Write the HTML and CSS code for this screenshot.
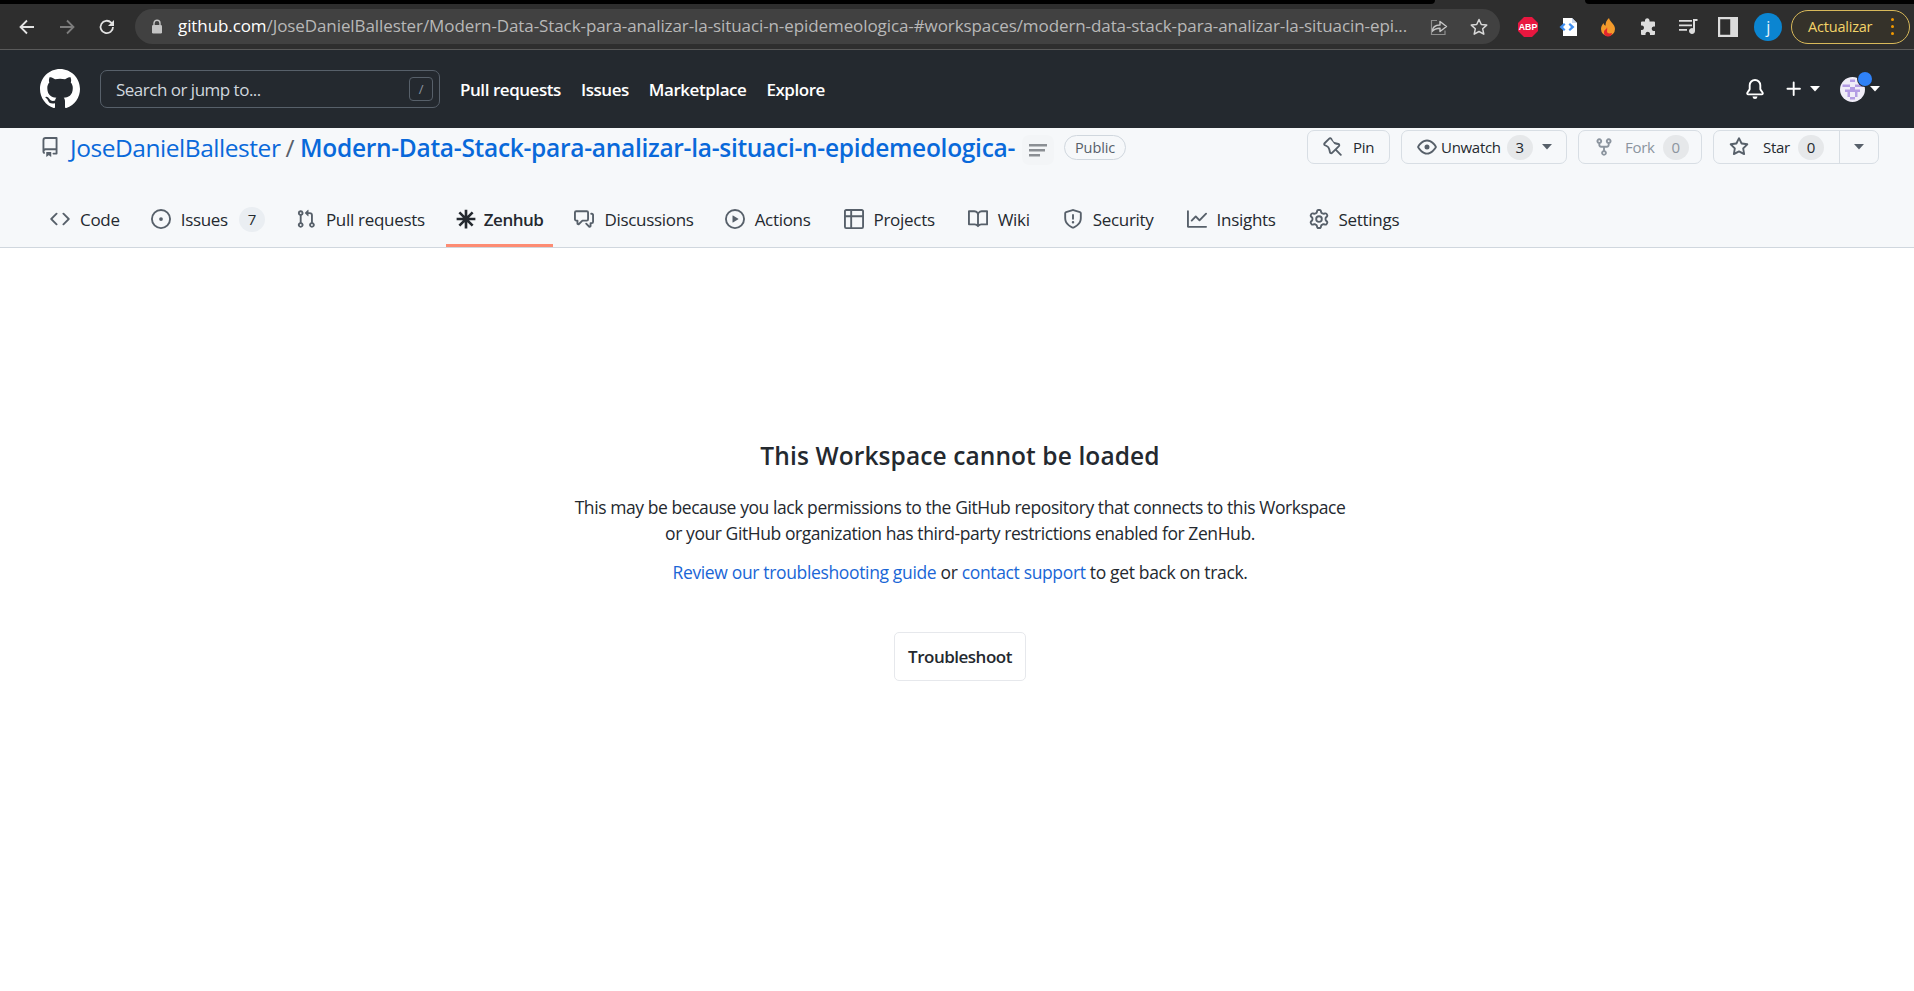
FILE: index.html
```html
<!DOCTYPE html>
<html lang="en">
<head>
<meta charset="utf-8">
<title>This Workspace cannot be loaded</title>
<link rel="stylesheet" href="styles.css">
</head>
<body>
<svg class="defs" width="0" height="0" aria-hidden="true">
  <symbol id="i-code" viewBox="0 0 16 16"><path d="M4.72 3.22a.75.75 0 011.06 1.06L2.06 8l3.72 3.72a.75.75 0 11-1.06 1.06L.47 8.53a.75.75 0 010-1.06l4.25-4.25zm6.56 0a.75.75 0 10-1.06 1.06L13.94 8l-3.72 3.72a.75.75 0 101.06 1.06l4.25-4.25a.75.75 0 000-1.06l-4.25-4.25z"/></symbol>
  <symbol id="i-issue" viewBox="0 0 16 16"><path d="M8 9.5a1.5 1.5 0 100-3 1.5 1.5 0 000 3z"/><path fill-rule="evenodd" d="M8 0a8 8 0 100 16A8 8 0 008 0zM1.5 8a6.5 6.5 0 1113 0 6.5 6.5 0 01-13 0z"/></symbol>
  <symbol id="i-pr" viewBox="0 0 16 16"><path fill-rule="evenodd" d="M7.177 3.073L9.573.677A.25.25 0 0110 .854v4.792a.25.25 0 01-.427.177L7.177 3.427a.25.25 0 010-.354zM3.75 2.5a.75.75 0 100 1.5.75.75 0 000-1.5zm-2.25.75a2.25 2.25 0 113 2.122v5.256a2.251 2.251 0 11-1.5 0V5.372A2.25 2.25 0 011.5 3.25zM11 2.5h-1V4h1a1 1 0 011 1v5.628a2.251 2.251 0 101.5 0V5A2.5 2.5 0 0011 2.5zm1 10.25a.75.75 0 111.5 0 .75.75 0 01-1.5 0zM3.75 12a.75.75 0 100 1.5.75.75 0 000-1.5z"/></symbol>
  <symbol id="i-zen" viewBox="0 0 16 16"><path d="M8 .5v15M.5 8h15M2.700 2.700l10.600 10.600M13.300 2.700L2.700 13.300" stroke="#24292f" stroke-width="2.100" fill="none"/><circle cx="8" cy="8" r="2.600" fill="#24292f"/></symbol>
  <symbol id="i-disc" viewBox="0 0 16 16"><path fill-rule="evenodd" d="M1.5 2.75a.25.25 0 01.25-.25h8.5a.25.25 0 01.25.25v5.5a.25.25 0 01-.25.25h-3.5a.75.75 0 00-.53.22L3.5 11.44V9.25a.75.75 0 00-.75-.75h-1a.25.25 0 01-.25-.25v-5.5zM1.75 1A1.75 1.75 0 000 2.75v5.5C0 9.216.784 10 1.75 10H2v1.543a1.457 1.457 0 002.487 1.03L7.061 10h3.189A1.75 1.75 0 0012 8.25v-5.5A1.75 1.75 0 0010.25 1h-8.5zM14.5 4.75a.25.25 0 00-.25-.25h-.5a.75.75 0 110-1.5h.5c.966 0 1.75.784 1.75 1.75v5.5A1.75 1.75 0 0114.25 12H14v1.543a1.457 1.457 0 01-2.487 1.03L9.22 12.28a.75.75 0 111.06-1.06l2.22 2.22v-2.19a.75.75 0 01.75-.75h1a.25.25 0 00.25-.25v-5.5z"/></symbol>
  <symbol id="i-play" viewBox="0 0 16 16"><path fill-rule="evenodd" d="M1.5 8a6.5 6.5 0 1113 0 6.5 6.5 0 01-13 0zM8 0a8 8 0 100 16A8 8 0 008 0zM6.379 5.227A.25.25 0 006 5.442v5.117a.25.25 0 00.379.214l4.264-2.559a.25.25 0 000-.428L6.379 5.227z"/></symbol>
  <symbol id="i-table" viewBox="0 0 16 16"><path fill-rule="evenodd" d="M0 1.75C0 .784.784 0 1.75 0h12.5C15.216 0 16 .784 16 1.75v12.5A1.75 1.75 0 0114.25 16H1.75A1.75 1.75 0 010 14.25V1.75zM1.5 6.5v7.75c0 .138.112.25.25.25H5v-8H1.5zM5 5H1.5V1.75a.25.25 0 01.25-.25H5V5zm1.5 1.5v8h7.75a.25.25 0 00.25-.25V6.5h-8zm8-1.5h-8V1.5h7.75a.25.25 0 01.25.25V5z"/></symbol>
  <symbol id="i-book" viewBox="0 0 16 16"><path fill-rule="evenodd" d="M0 1.75A.75.75 0 01.75 1h4.253c1.227 0 2.317.59 3 1.501A3.744 3.744 0 0111.006 1h4.245a.75.75 0 01.75.75v10.5a.75.75 0 01-.75.75h-4.507a2.25 2.25 0 00-1.591.659l-.622.621a.75.75 0 01-1.06 0l-.622-.621A2.25 2.25 0 005.258 13H.75a.75.75 0 01-.75-.75V1.75zm8.755 3a2.25 2.25 0 012.25-2.25H14.5v9h-3.757c-.71 0-1.4.201-1.992.572l.004-7.322zm-1.504 7.324l.004-5.073-.002-2.253A2.25 2.25 0 005.003 2.5H1.5v9h3.757a3.75 3.75 0 011.994.574z"/></symbol>
  <symbol id="i-shield" viewBox="0 0 16 16"><path fill-rule="evenodd" d="M7.467.133a1.75 1.75 0 011.066 0l5.25 1.68A1.75 1.75 0 0115 3.48V7c0 1.566-.32 3.182-1.303 4.682-.983 1.498-2.585 2.813-5.032 3.855a1.7 1.7 0 01-1.33 0c-2.447-1.042-4.049-2.357-5.032-3.855C1.32 10.182 1 8.566 1 7V3.48a1.75 1.75 0 011.217-1.667l5.25-1.68zm.61 1.429a.25.25 0 00-.153 0l-5.25 1.68a.25.25 0 00-.174.238V7c0 1.358.275 2.666 1.057 3.86.784 1.194 2.121 2.34 4.366 3.297a.2.2 0 00.154 0c2.245-.956 3.582-2.104 4.366-3.298C13.225 9.666 13.5 8.36 13.5 7V3.48a.25.25 0 00-.174-.237l-5.25-1.68zM9 10.5a1 1 0 11-2 0 1 1 0 012 0zm-.25-5.75a.75.75 0 10-1.5 0v3a.75.75 0 001.5 0v-3z"/></symbol>
  <symbol id="i-graph" viewBox="0 0 16 16"><path fill-rule="evenodd" d="M1.5 1.75a.75.75 0 00-1.5 0v12.5c0 .414.336.75.75.75h14.5a.75.75 0 000-1.5H1.5V1.75zm14.28 2.53a.75.75 0 00-1.06-1.06L10 7.94 7.53 5.47a.75.75 0 00-1.06 0L3.22 8.72a.75.75 0 001.06 1.06L7 7.06l2.47 2.47a.75.75 0 001.06 0l5.25-5.25z"/></symbol>
  <symbol id="i-gear" viewBox="0 0 16 16"><path fill-rule="evenodd" d="M7.429 1.525a6.593 6.593 0 011.142 0c.036.003.108.036.137.146l.289 1.105c.147.56.55.967.997 1.189.174.086.341.183.501.29.417.278.97.423 1.53.27l1.102-.303c.11-.03.175.016.195.046.219.31.41.641.573.989.014.031.022.11-.059.19l-.815.806c-.411.406-.562.957-.53 1.456a4.588 4.588 0 010 .582c-.032.499.119 1.05.53 1.456l.815.806c.08.08.073.159.059.19a6.494 6.494 0 01-.573.99c-.02.029-.086.074-.195.045l-1.103-.303c-.559-.153-1.112-.008-1.529.27-.16.107-.327.204-.5.29-.449.222-.851.628-.998 1.189l-.289 1.105c-.029.11-.101.143-.137.146a6.613 6.613 0 01-1.142 0c-.036-.003-.108-.037-.137-.146l-.289-1.105c-.147-.56-.55-.967-.997-1.189a4.502 4.502 0 01-.501-.29c-.417-.278-.97-.423-1.53-.27l-1.102.303c-.11.03-.175-.016-.195-.046a6.492 6.492 0 01-.573-.989c-.014-.031-.022-.11.059-.19l.815-.806c.411-.406.562-.957.53-1.456a4.587 4.587 0 010-.582c.032-.499-.119-1.05-.53-1.456l-.815-.806c-.08-.08-.073-.159-.059-.19a6.44 6.44 0 01.573-.99c.02-.029.086-.075.195-.045l1.103.303c.559.153 1.112.008 1.529-.27.16-.107.327-.204.5-.29.449-.222.851-.628.998-1.189l.289-1.105c.029-.11.101-.143.137-.146zM8 0c-.236 0-.47.01-.701.03-.743.065-1.29.615-1.458 1.261l-.29 1.106c-.017.066-.078.158-.211.224a5.994 5.994 0 00-.668.386c-.123.082-.233.09-.3.071L3.27 2.776c-.644-.177-1.392.02-1.82.63a7.977 7.977 0 00-.704 1.217c-.315.675-.111 1.422.363 1.891l.815.806c.05.048.098.147.088.294a6.084 6.084 0 000 .772c.01.147-.038.246-.088.294l-.815.806c-.474.469-.678 1.216-.363 1.891.2.428.436.835.704 1.218.428.609 1.176.806 1.82.63l1.103-.303c.066-.019.176-.011.299.071.213.143.436.272.668.386.133.066.194.158.212.224l.289 1.106c.169.646.715 1.196 1.458 1.26a8.094 8.094 0 001.402 0c.743-.064 1.29-.614 1.458-1.26l.29-1.106c.017-.066.078-.158.211-.224a5.98 5.98 0 00.668-.386c.123-.082.233-.09.3-.071l1.102.302c.644.177 1.392-.02 1.82-.63.268-.382.505-.789.704-1.217.315-.675.111-1.422-.364-1.891l-.814-.806c-.05-.048-.098-.147-.088-.294a6.1 6.1 0 000-.772c-.01-.147.039-.246.088-.294l.814-.806c.475-.469.679-1.216.364-1.891a7.992 7.992 0 00-.704-1.218c-.428-.609-1.176-.806-1.82-.63l-1.103.303c-.066.019-.176.011-.299-.071a5.991 5.991 0 00-.668-.386c-.133-.066-.194-.158-.212-.224L10.16 1.29C9.99.645 9.444.095 8.701.031A8.094 8.094 0 008 0zm1.5 8a1.5 1.5 0 11-3 0 1.5 1.5 0 013 0zM11 8a3 3 0 11-6 0 3 3 0 016 0z"/></symbol>
  <symbol id="i-repo" viewBox="0 0 16 16"><path fill-rule="evenodd" d="M2 2.5A2.5 2.5 0 014.5 0h8.75a.75.75 0 01.75.75v12.5a.75.75 0 01-.75.75h-2.5a.75.75 0 110-1.5h1.75v-2h-8a1 1 0 00-.714 1.7.75.75 0 01-1.072 1.05A2.495 2.495 0 012 11.5v-9zm10.5-1V9h-8c-.356 0-.694.074-1 .208V2.5a1 1 0 011-1h8zM5 12.25v3.25a.25.25 0 00.4.2l1.45-1.087a.25.25 0 01.3 0L8.6 15.7a.25.25 0 00.4-.2v-3.25a.25.25 0 00-.25-.25h-3.5a.25.25 0 00-.25.25z"/></symbol>
  <symbol id="i-pin" viewBox="0 0 16 16"><path fill-rule="evenodd" d="M4.456.734a1.75 1.75 0 012.826.504l.613 1.327a3.081 3.081 0 002.084 1.707l2.454.584c1.332.317 1.8 1.972.832 2.94L11.06 10l3.72 3.72a.75.75 0 11-1.061 1.06L10 11.06l-2.204 2.205c-.968.968-2.623.5-2.94-.832l-.584-2.454a3.081 3.081 0 00-1.707-2.084l-1.327-.613a1.75 1.75 0 01-.504-2.826L4.456.734zM5.92 1.866a.25.25 0 00-.404-.072L1.794 5.516a.25.25 0 00.072.404l1.328.613A4.582 4.582 0 015.73 9.63l.584 2.454a.25.25 0 00.42.12l5.47-5.47a.25.25 0 00-.12-.42L10.63 6.13a4.581 4.581 0 01-3.098-2.537L5.92 1.866z"/></symbol>
  <symbol id="i-eye" viewBox="0 0 16 16"><path fill-rule="evenodd" d="M1.679 7.932c.412-.621 1.242-1.75 2.366-2.717C5.175 4.242 6.527 3.5 8 3.5c1.473 0 2.824.742 3.955 1.715 1.124.967 1.954 2.096 2.366 2.717a.119.119 0 010 .136c-.412.621-1.242 1.75-2.366 2.717C10.825 11.758 9.473 12.5 8 12.5c-1.473 0-2.824-.742-3.955-1.715C2.92 9.818 2.09 8.69 1.679 8.068a.119.119 0 010-.136zM8 2c-1.981 0-3.67.992-4.933 2.078C1.797 5.169.88 6.423.43 7.1a1.619 1.619 0 000 1.798c.45.678 1.367 1.932 2.637 3.024C4.329 13.008 6.019 14 8 14c1.981 0 3.67-.992 4.933-2.078 1.27-1.091 2.187-2.345 2.637-3.023a1.619 1.619 0 000-1.798c-.45-.678-1.367-1.932-2.637-3.023C11.671 2.992 9.981 2 8 2zm0 8a2 2 0 100-4 2 2 0 000 4z"/></symbol>
  <symbol id="i-fork" viewBox="0 0 16 16"><path fill-rule="evenodd" d="M5 3.25a.75.75 0 11-1.5 0 .75.75 0 011.5 0zm0 2.122a2.25 2.25 0 10-1.5 0v.878A2.25 2.25 0 005.75 8.5h1.5v2.128a2.251 2.251 0 101.5 0V8.5h1.5a2.25 2.25 0 002.25-2.25v-.878a2.25 2.25 0 10-1.5 0v.878a.75.75 0 01-.75.75h-4.5A.75.75 0 015 6.25v-.878zm3.75 7.378a.75.75 0 11-1.5 0 .75.75 0 011.5 0zm3-8.75a.75.75 0 100-1.5.75.75 0 000 1.5z"/></symbol>
  <symbol id="i-star" viewBox="0 0 16 16"><path fill-rule="evenodd" d="M8 .25a.75.75 0 01.673.418l1.882 3.815 4.21.612a.75.75 0 01.416 1.279l-3.046 2.97.719 4.192a.75.75 0 01-1.088.791L8 12.347l-3.766 1.98a.75.75 0 01-1.088-.79l.72-4.194L.818 6.374a.75.75 0 01.416-1.28l4.21-.611L7.327.668A.75.75 0 018 .25zm0 2.445L6.615 5.5a.75.75 0 01-.564.41l-3.097.45 2.24 2.184a.75.75 0 01.216.664l-.528 3.084 2.769-1.456a.75.75 0 01.698 0l2.77 1.456-.53-3.084a.75.75 0 01.216-.664l2.24-2.183-3.096-.45a.75.75 0 01-.564-.41L8 2.694v.001z"/></symbol>
  <symbol id="i-caret" viewBox="0 0 10 6"><path d="M0 0h10L5 5.5z"/></symbol>
</svg>

<div class="strip"><div class="strip-left"></div><div class="strip-gap"></div><div class="strip-right"></div></div>

<div class="toolbar">
  <div class="tb-btn"><svg class="tb-ico" viewBox="0 0 20 20"><path d="M17 10H4M10 3.5L3.5 10l6.5 6.5" fill="none" stroke="#e3e3e3" stroke-width="1.8"/></svg></div>
  <div class="tb-btn"><svg class="tb-ico" viewBox="0 0 20 20"><path d="M3 10h13M10 3.5l6.5 6.5-6.5 6.5" fill="none" stroke="#7d7d7d" stroke-width="1.8"/></svg></div>
  <div class="tb-btn"><svg class="tb-ico" viewBox="0 0 20 20"><path d="M16 10a6.2 6.2 0 11-1.8-4.4L16.5 8" fill="none" stroke="#e3e3e3" stroke-width="1.8"/><path d="M17 3v6h-6z" fill="#e3e3e3"/></svg></div>
  <div class="omnibox">
    <svg class="lock" viewBox="0 0 12 15"><path d="M3 6V4.2a3 3 0 016 0V6" fill="none" stroke="#c4c4c4" stroke-width="1.4"/><rect x="1" y="6" width="10" height="8.5" rx="1.2" fill="#c4c4c4"/></svg>
    <div class="url"><span class="url-host">github.com</span>/JoseDanielBallester/Modern-Data-Stack-para-analizar-la-situaci-n-epidemeologica-#workspaces/modern-data-stack-para-analizar-la-situacin-epi...</div>
    <div class="tb-btn"><svg class="tb-ico" viewBox="0 0 20 20"><path d="M11 4.5V8C6 8 3.5 10.5 3 14.5 5 12 7.500 11.200 11 11.200v3.300L17.500 9.500z" fill="none" stroke="#c8c8c8" stroke-width="1.400" stroke-linejoin="round"/><path d="M8 3.500H2.500v14H16v-4" fill="none" stroke="#8f8f8f" stroke-width="1.200"/></svg></div>
    <div class="tb-btn"><svg class="tb-ico" viewBox="0 0 20 20"><path d="M10 2.500l2.300 5 5.400.6-4 3.700 1.100 5.400L10 14.500l-4.800 2.700 1.100-5.400-4-3.700 5.400-.6z" fill="none" stroke="#d8d8d8" stroke-width="1.500" stroke-linejoin="round"/></svg></div>
  </div>
  <div class="exts">
    <div class="tb-btn"><svg class="ext" viewBox="0 0 20 20"><path d="M6 0h8l6 6v8l-6 6H6l-6-6V6z" fill="#e8173f"/><text x="10" y="13.300" class="abp">ABP</text></svg></div>
    <div class="tb-btn"><svg class="ext" viewBox="0 0 20 20"><path d="M5 1h9l5 5v13H5z" fill="#fff"/><path d="M14 1l5 5h-5z" fill="#c9d8ef"/><path d="M6 6L1.500 10 6 14l1.500-1.500L5 10l2.500-2.500z" fill="#3f8ef0"/><path d="M12 6l4.500 4-4.500 4-1.500-1.500L13 10l-2.500-2.500z" fill="#3f8ef0"/></svg></div>
    <div class="tb-btn"><svg class="ext" viewBox="0 0 20 20"><path d="M11 1c1 4 6 6 6 11a7 7 0 01-14 0c0-3 1.500-4.500 2.500-6 .3 1.500 1 2.300 2 2.800C7.500 5.800 8.500 3 11 1z" fill="#f39a2b"/><path d="M9 10c0 2.500-3 2.500-3 5a4 4 0 008 1c-2 .8-5 .5-5-1.500 0-1.500 .5-2.800 0-4.500z" fill="#e3262d"/></svg></div>
    <div class="tb-btn"><svg class="ext" viewBox="0 0 20 20"><path d="M7 3a2.300 2.300 0 014.500 0V4.500H16a1 1 0 011 1v4h-1.500a2.300 2.300 0 000 4.500H17v3a1 1 0 01-1 1h-4v-1.500a2.300 2.300 0 00-4.500 0V18H4a1 1 0 01-1-1v-4h1.200a2.300 2.300 0 000-4.500H3v-3a1 1 0 011-1h3z" fill="#dcdcdc"/></svg></div>
    <div class="tb-btn"><svg class="ext" viewBox="0 0 20 20"><path d="M1 3h13v1.800H1zM1 7.500h13v1.800H1zM1 12h8v1.800H1z" fill="#dcdcdc"/><path d="M15 2h4.500v2h-2.500v10a3 3 0 11-2-2.800z" fill="#dcdcdc"/></svg></div>
    <div class="tb-btn"><svg class="ext" viewBox="0 0 18 18"><path fill-rule="evenodd" d="M0 0h18v18H0zM2 2v14h9V2z" fill="#dcdcdc"/></svg></div>
    <div class="tb-btn"><div class="profile">j</div></div>
  </div>
  <div class="update"><span class="update-label">Actualizar</span><span class="dots"><i></i><i></i><i></i></span></div>
</div>

<header class="gh-head">
  <svg class="gh-logo" viewBox="0 0 16 16"><path fill-rule="evenodd" d="M8 0C3.58 0 0 3.58 0 8c0 3.54 2.29 6.53 5.47 7.59.4.07.55-.17.55-.38 0-.19-.01-.82-.01-1.49-2.01.37-2.53-.49-2.69-.94-.09-.23-.48-.94-.82-1.13-.28-.15-.68-.52-.01-.53.63-.01 1.08.58 1.23.82.72 1.21 1.87.87 2.33.66.07-.52.28-.87.51-1.07-1.78-.2-3.64-.89-3.64-3.95 0-.87.31-1.59.82-2.15-.08-.2-.36-1.02.08-2.12 0 0 .67-.21 2.2.82.64-.18 1.32-.27 2-.27.68 0 1.36.09 2 .27 1.53-1.04 2.2-.82 2.2-.82.44 1.1.16 1.92.08 2.12.51.56.82 1.27.82 2.15 0 3.07-1.87 3.75-3.65 3.95.29.25.54.73.54 1.48 0 1.07-.01 1.93-.01 2.2 0 .21.15.46.55.38A8.013 8.013 0 0016 8c0-4.42-3.58-8-8-8z"/></svg>
  <div class="search"><span class="search-text">Search or jump to...</span><span class="slash">/</span></div>
  <nav class="gh-nav"><a>Pull requests</a><a>Issues</a><a>Marketplace</a><a>Explore</a></nav>
  <div class="gh-right">
    <svg class="head-ico bell" viewBox="0 0 16 16"><path d="M8 16a2 2 0 001.985-1.75c.017-.137-.097-.25-.235-.25h-3.5c-.138 0-.252.113-.235.25A2 2 0 008 16z"/><path fill-rule="evenodd" d="M8 1.5A3.5 3.5 0 004.5 5v2.947c0 .346-.102.683-.294.97l-1.703 2.556a.018.018 0 00-.003.01l.001.006c0 .002.002.004.004.006a.017.017 0 00.006.004l.007.001h10.964l.007-.001a.016.016 0 00.006-.004.016.016 0 00.004-.006l.001-.007a.017.017 0 00-.003-.01l-1.703-2.554a1.75 1.75 0 01-.294-.97V5A3.5 3.5 0 008 1.5zM3 5a5 5 0 0110 0v2.947c0 .05.015.098.042.139l1.703 2.555A1.518 1.518 0 0113.482 13H2.518a1.518 1.518 0 01-1.263-2.36l1.703-2.554A.25.25 0 003 7.947V5z"/></svg>
    <svg class="head-ico plus" viewBox="0 0 16 16"><path d="M7.750 2a.75.75 0 01.75.75V7h4.250a.75.75 0 110 1.500H8.500v4.250a.75.75 0 11-1.500 0V8.500H2.750a.75.75 0 010-1.500H7V2.750A.75.75 0 017.750 2z"/></svg>
    <svg class="head-caret plus-caret"><use href="#i-caret"/></svg>
    <div class="avatar-wrap">
      <svg class="avatar" viewBox="0 0 10 10"><defs><clipPath id="av"><circle cx="5" cy="5" r="5"/></clipPath></defs><g clip-path="url(#av)"><rect width="10" height="10" fill="#f0edf8"/><path d="M4 1h2v1H4zM1 3h2v1H1zM7 3h2v1H7zM3 3h1v1H3zM6 3h1v1H6zM2 5h2v1H2zM6 5h2v1H6zM4 5h2v1H4zM3 6h1v2H3zM6 6h1v2H6zM4 8h2v1H4zM4 4h2v1H4z" fill="#b39ce4"/></g></svg>
      <span class="dot"></span>
    </div>
    <svg class="head-caret"><use href="#i-caret"/></svg>
  </div>
</header>

<section class="repo-head">
  <div class="repo-row">
    <svg class="ico repo-ico"><use href="#i-repo"/></svg>
    <a class="owner">JoseDanielBallester</a>
    <span class="sep">/</span>
    <a class="repo-name">Modern-Data-Stack-para-analizar-la-situaci-n-epidemeologica-</a>
    <span class="list-box"><svg class="list-ico" viewBox="0 0 18 14"><path d="M0 1h18v2.400H0zM0 6h16v2.400H0zM0 11h11v2.400H0z" fill="#8b8f94"/></svg></span>
    <span class="public">Public</span>
    <div class="actions">
      <div class="btn btn-pin"><svg class="ico"><use href="#i-pin"/></svg><span>Pin</span></div>
      <div class="btn btn-watch"><svg class="ico"><use href="#i-eye"/></svg><span>Unwatch</span><b class="count">3</b><svg class="caret"><use href="#i-caret"/></svg></div>
      <div class="btn btn-fork"><svg class="ico"><use href="#i-fork"/></svg><span>Fork</span><b class="count">0</b></div>
      <div class="btn-group">
        <div class="btn-star"><svg class="ico"><use href="#i-star"/></svg><span>Star</span><b class="count">0</b></div>
        <div class="btn-more"><svg class="caret"><use href="#i-caret"/></svg></div>
      </div>
    </div>
  </div>
  <nav class="tabs">
    <a class="tab"><svg class="ico"><use href="#i-code"/></svg>Code</a>
    <a class="tab"><svg class="ico"><use href="#i-issue"/></svg>Issues<b class="count tab-count">7</b></a>
    <a class="tab"><svg class="ico"><use href="#i-pr"/></svg>Pull requests</a>
    <a class="tab tab-on"><svg class="ico"><use href="#i-zen"/></svg>Zenhub</a>
    <a class="tab"><svg class="ico"><use href="#i-disc"/></svg>Discussions</a>
    <a class="tab"><svg class="ico"><use href="#i-play"/></svg>Actions</a>
    <a class="tab tab-roomy"><svg class="ico"><use href="#i-table"/></svg>Projects</a>
    <a class="tab tab-roomy"><svg class="ico"><use href="#i-book"/></svg>Wiki</a>
    <a class="tab tab-roomy"><svg class="ico"><use href="#i-shield"/></svg>Security</a>
    <a class="tab tab-roomy"><svg class="ico"><use href="#i-graph"/></svg>Insights</a>
    <a class="tab tab-roomy"><svg class="ico"><use href="#i-gear"/></svg>Settings</a>
  </nav>
</section>

<main class="notice">
  <h1 class="notice-title">This Workspace cannot be loaded</h1>
  <p class="notice-text">This may be because you lack permissions to the GitHub repository that connects to this Workspace<br>or your GitHub organization has third-party restrictions enabled for ZenHub.</p>
  <p class="notice-help"><a>Review our troubleshooting guide</a> or <a>contact support</a> to get back on track.</p>
  <button class="trouble">Troubleshoot</button>
</main>
</body>
</html>
```

FILE: styles.css
```css
* { box-sizing: border-box; }
html, body { margin: 0; height: 100%; }
body {
  background: #fff;
  color: #24292f;
  font-family: "Open Sans", "Noto Sans", "Liberation Sans", sans-serif;
  font-size: 17px;
  letter-spacing: -0.5px;
  overflow: hidden;
}
.defs { position: absolute; }
a { color: inherit; text-decoration: none; }

.strip { display: flex; height: 4px; background: #2e2e2e; }
.strip-left { width: 1435px; background: #000; border-bottom-right-radius: 4px; }
.strip-gap { width: 150px; }
.strip-right { flex: 1; background: #000; border-bottom-left-radius: 4px; }

.toolbar {
  display: flex;
  align-items: center;
  height: 46px;
  padding-left: 7px;
  background: #2e2e2e;
  border-bottom: 1px solid #5a5a5a;
}
.tb-btn { flex: none; width: 40px; height: 35px; display: flex; align-items: center; justify-content: center; }
.tb-ico { width: 20px; height: 20px; }
.omnibox {
  flex: none;
  display: flex;
  align-items: center;
  width: 1365px;
  height: 35px;
  margin-left: 8px;
  padding: 0 1px 0 16px;
  background: #414141;
  border-radius: 18px;
}
.lock { flex: none; width: 12px; height: 15px; margin-right: 15px; }
.url {
  flex: 1;
  min-width: 0;
  padding-bottom: 2px;
  white-space: nowrap;
  overflow: hidden;
  color: #b8b8b8;
  font-size: 17px;
  letter-spacing: -0.09px;
}
.url-host { color: #fff; }
.exts { display: flex; margin-left: 8px; }
.ext { width: 20px; height: 20px; }
.abp { font: 700 8.800px "Liberation Sans", sans-serif; fill: #fff; text-anchor: middle; letter-spacing: 0; }
.profile {
  width: 28px; height: 28px; border-radius: 50%;
  background: #0b85d1; color: #e8f4fb; font-size: 16px;
  display: flex; align-items: center; justify-content: center;
}
.update {
  flex: none;
  display: flex;
  align-items: center;
  width: 119px;
  height: 34px;
  margin-left: 3px;
  padding: 0 0 1px 16px;
  border: 1px solid #d8b95a;
  border-radius: 17px;
  background: #35322a;
  color: #f3d468;
  font-size: 14.500px;
  letter-spacing: -0.2px;
}
.dots { display: flex; flex-direction: column; gap: 4px; margin-left: auto; margin-right: 15px; }
.dots i { width: 3px; height: 3px; border-radius: 50%; background: #f29900; }

.gh-head {
  display: flex;
  align-items: center;
  height: 78px;
  padding: 0 34px 0 40px;
  background: #24292f;
  color: #fff;
}
.gh-logo { flex: none; width: 40px; height: 40px; fill: #fff; margin-right: 20px; }
.search {
  flex: none;
  display: flex;
  align-items: center;
  justify-content: space-between;
  width: 340px;
  height: 38px;
  padding: 0 6px 0 15px;
  border: 1px solid #57606a;
  border-radius: 7px;
  color: #d0d7de;
}
.slash {
  width: 24px; height: 24px;
  display: flex; align-items: center; justify-content: center;
  border: 1px solid #57606a; border-radius: 4px;
  color: #8c959f; font-size: 13px;
}
.gh-nav { display: flex; gap: 20px; margin-left: 20px; font-weight: 600; letter-spacing: -0.45px; }
.gh-right { display: flex; align-items: center; margin-left: auto; }
.head-ico { width: 20px; height: 20px; fill: #fff; }
.plus { margin-left: 19px; }
.head-caret { width: 10px; height: 6px; fill: #fff; margin-left: 5px; }
.plus-caret { margin-left: 6px; }
.avatar-wrap { position: relative; width: 25px; height: 25px; margin-left: 20px; }
.avatar { display: block; width: 25px; height: 25px; }
.dot {
  position: absolute; top: -5px; left: 18px;
  width: 14px; height: 14px; border-radius: 50%;
  background: #2f81f7; box-shadow: 0 0 0 1px #24292f;
}

.repo-head {
  height: 120px;
  padding-top: 2px;
  background: #f6f8fa;
  border-bottom: 1px solid #d0d7de;
}
.repo-row { display: flex; align-items: center; height: 34px; padding: 0 35px 0 40px; }
.ico { flex: none; width: 20px; height: 20px; fill: #57606a; }
.repo-ico { margin-right: 10px; }
.owner { color: #0969da; font-size: 24.500px; letter-spacing: -0.45px; }
.repo-name { color: #0969da; font-size: 24.500px; font-weight: 600; letter-spacing: -0.29px; }
.sep { margin: 0 6px 0 5px; color: #57606a; font-size: 24.500px; }
.list-box {
  flex: none;
  display: flex; align-items: center; justify-content: center;
  width: 32px; height: 30px;
  margin: 6px 0 0 7px;
  background: #f3f5f7;
  border-radius: 7px;
}
.list-ico { width: 18px; height: 14px; }
.public {
  margin-left: 10px;
  width: 62px;
  height: 25px;
  display: flex; align-items: center; justify-content: center;
  border: 1px solid #d0d7de;
  border-radius: 13px;
  color: #57606a;
  font-size: 14.500px;
  font-weight: 500;
  letter-spacing: -0.1px;
}
.actions { display: flex; gap: 11px; margin-left: auto; font-size: 15px; letter-spacing: -0.3px; font-weight: 500; }
.btn, .btn-group {
  display: flex; align-items: center;
  height: 34px;
  border: 1px solid #d8dee4;
  border-radius: 7px;
  background: #f6f8fa;
}
.btn-pin { width: 83px; padding-left: 15px; gap: 10px; }
.btn-watch { width: 166px; padding-left: 15px; gap: 4px; }
.btn-fork { width: 124px; padding-left: 15px; gap: 11px; color: #8c959f; }
.btn-fork .ico { fill: #8c959f; }
.btn-group { width: 166px; }
.btn-star { display: flex; align-items: center; width: 125px; padding-left: 15px; gap: 14px; }
.btn-more { flex: 1; height: 100%; display: flex; align-items: center; justify-content: center; border-left: 1px solid #d8dee4; }
.caret { flex: none; width: 10px; height: 6px; fill: #57606a; }
.btn-watch .caret { margin-left: 5px; }
.count {
  flex: none;
  display: flex; align-items: center; justify-content: center;
  width: 26px; height: 25px;
  border-radius: 13px;
  background: #e6e8ea;
  font-weight: 500;
}
.btn-watch .count { margin-left: 2px; }
.btn-fork .count { margin-left: -3px; }
.btn-star .count { margin-left: -6px; }

.tabs { display: flex; gap: 11px; height: 55px; margin-top: 28px; padding-left: 40px; align-items: stretch; letter-spacing: -0.3px; }
.tab {
  display: flex; align-items: center; gap: 10px;
  padding: 2px 10px 0;
  border-bottom: 3px solid transparent;
}
.tab-on { font-weight: 600; gap: 8px; letter-spacing: -0.5px; border-bottom-color: #fd8c73; }
.tab-roomy { margin-left: 2px; }
.tab-count { margin-left: 1px; background: #eaeef2; font-size: 15px; }

.notice { display: flex; flex-direction: column; align-items: center; padding: 191px 0 0 6px; }
.notice-title { margin: 0; font-size: 24.500px; font-weight: 600; line-height: 34px; letter-spacing: 0.1px; }
.notice-text { margin: 21px 0 0; text-align: center; font-size: 17.500px; line-height: 26px; letter-spacing: -0.43px; }
.notice-help { margin: 13px 0 0; font-size: 17.500px; line-height: 26px; letter-spacing: -0.35px; }
.notice-help a { color: #1a66d6; }
.trouble {
  width: 132px; height: 49px;
  margin-top: 47px;
  background: #fff;
  border: 1px solid #e6e8ec;
  border-radius: 5px;
  color: #24292f;
  font: 600 17px "Open Sans", sans-serif;
  letter-spacing: -0.5px;
}
```
